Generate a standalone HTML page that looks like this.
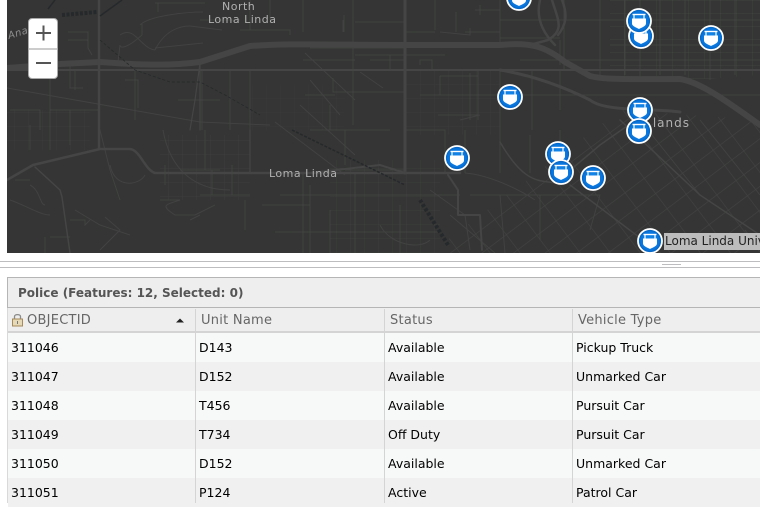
<!DOCTYPE html>
<html><head><meta charset="utf-8"><style>
*{box-sizing:border-box}
html,body{margin:0;padding:0;background:#fff;width:760px;height:503px;overflow:hidden;font-family:"DejaVu Sans",sans-serif;font-size:12.5px}
#map{position:absolute;left:7px;top:0;width:753px;height:253px;background:#343534;overflow:hidden}
#map svg{position:absolute;left:-7px;top:0}
.z{position:absolute;left:28px;top:18px;width:30px;height:61px;background:#fff;border-radius:4px;border:1px solid #aaa}
.l1{position:absolute;left:0;width:760px;height:1px;background:#bdbdc0}
.handle{position:absolute;left:662px;top:264px;width:19px;height:1px;background:#bdbdc0}
.title{position:absolute;left:7px;top:277px;width:753px;height:31px;background:#eeeeee;border:1px solid #b5b5b5;border-right:0;font-weight:bold;color:#555;padding-left:10px;line-height:30px;font-size:12px}
.hdr{position:absolute;left:8px;top:308px;width:752px;height:25px;background:#eeeeee;border-bottom:2px solid #d4d4d4;color:#666;line-height:25px;font-size:13px;letter-spacing:.25px}
.hdr span{position:absolute;top:0}
.row{position:absolute;left:8px;width:752px;height:29px;line-height:29px;color:#000;overflow:hidden}
.row span{position:absolute;top:0;line-height:30px}
.a{background:#f7f8f8}.b{background:#f0f0f0}
.v{position:absolute;top:309px;width:1px;height:194px;background:#d4d4d4}
.left{position:absolute;left:7px;top:308px;width:1px;height:195px;background:#d9d9d9}
.lab{position:absolute;left:664px;top:233px;width:96px;height:17px;background:#bcbcbc;color:#222;line-height:17px;font-size:12px;white-space:nowrap;overflow:hidden;padding-left:1px}
</style></head><body>
<div id="map">
<svg width="760" height="253" viewBox="0 0 760 253" fill="none">
<defs>
<pattern id="g1" width="16" height="13" patternUnits="userSpaceOnUse"><path d="M0 0H16M0 0V13" stroke="#424342" stroke-width="1"/></pattern>
<pattern id="g2" width="24" height="19" patternUnits="userSpaceOnUse" patternTransform="rotate(-37 600 200)"><path d="M0 0H24M0 0V19" stroke="#424342" stroke-width="1.2"/></pattern>
<pattern id="g3" width="14" height="14" patternUnits="userSpaceOnUse"><path d="M0 0H14M0 0V14" stroke="#3f403f" stroke-width="1"/></pattern>
<radialGradient id="bl" cx=".5" cy=".5" r=".55"><stop offset="0" stop-color="#1a90f0"/><stop offset=".7" stop-color="#0874dc"/><stop offset="1" stop-color="#004f9e"/></radialGradient>
<symbol id="m" viewBox="-14 -14 28 28" overflow="visible">
<circle r="12" fill="url(#bl)" stroke="#fff" stroke-width="1.8"/>
<path d="M-6.500-6.500H6.500" stroke="#fff" stroke-width="1.4"/>
<path d="M-5-6.500V-2M5-6.500V-2" stroke="#fff" stroke-width="1.200"/>
<path d="M-7-2.500H7V2.500C7 5 3 6.500 0 8C-3 6.500-7 5-7 2.500Z" fill="#fff"/>
</symbol>
</defs>
<rect width="760" height="253" fill="#343534"/>
<!-- street grids -->
<path d="M610 0L760 0V75L690 80L610 78Z" fill="url(#g1)" opacity=".9"/>
<path d="M430 253L620 110L760 120V253Z" fill="url(#g2)"/>
<path d="M330 160H440V253H330Z" fill="url(#g3)" opacity=".8"/>
<path d="M160 135H250V200H160Z" fill="url(#g3)" opacity=".7"/>
<path d="M7 110H90V150H7Z" fill="url(#g3)" opacity=".6"/>
<path d="M405 70H500V135H405Z" fill="url(#g3)" opacity=".5"/>
<path d="M250 85H345V130H250Z" fill="url(#g3)" opacity=".4"/>
<!-- minor roads -->
<g stroke="#414241" stroke-width="1">
<path d="M155 3H205M158 3V12M140 25C150 15 190 12 203 12M142 24V35M142 35C125 50 120 48 120 45"/>
<path d="M120 35C135 25 140 48 155 50C165 30 180 26 190 26L222 30M155 48L203 43M120 45L118 62"/>
<path d="M68 32H88V48L92 55M68 40H88M70 62V88H83M125 80H138V108"/>
<path d="M7 88L200 122L270 125M50 70V150M75 70V90M50 110H100M10 110H40V130M30 125V150M70 110V145"/>
<path d="M135 70V120M202 70V130M230 70V130M250 70V130M178 100H220M240 30H290V35M250 0V30"/>
<path d="M303 0V32M353 0V125M303 60H355M355 22H405M343 20V32M344 15V32M200 20H240M270 0V20"/>
<path d="M305 53L355 100M310 48H405M355 55H445M420 65V60H432V70M390 55V70M370 60H405"/>
<path d="M435 0V30M456 32V12M405 32H435M440 32L470 35V28M465 32H500M475 10H500M480 5V15M500 0V45"/>
<path d="M478 70V120M470 73V120M478 76H440M440 76V95H430M420 95H478M438 115H478M480 115L460 120"/>
<path d="M564 0V70M500 70V130M560 70V110M532 70V130M470 95H760M600 0V80M625 0V75M640 0V80M660 0V75M685 0V75M710 0V80M735 0V75"/>
<path d="M520 60H760M500 20H760M500 38H560M560 40V65M610 45H760"/>
<path d="M360 72L383 88M333 78V92H405M310 80L340 115M305 95H335M310 130H390M330 105V130"/>
<path d="M275 122L345 175M300 105L355 155M345 130V165M345 170H405"/>
<path d="M303 173V253M355 173V253M280 195H460M262 205H310M275 232H440M310 185V253M330 210V253"/>
<path d="M430 190L465 215L470 250M380 225C390 245 420 250 430 240M400 205V253"/>
<path d="M100 130L110 170L120 200M165 165V185M163 130C170 170 195 190 230 190M180 170H220M110 165C115 190 140 185 145 175"/>
<path d="M205 130V170M200 195H250M212 170V195M232 165V195M160 200H180C165 205 160 205 175 215L195 215L215 205M245 200V230M190 220L200 215"/>
<path d="M75 210L100 225L130 235M105 217L120 230L100 250M70 220H85V225L90 220M45 237V253M50 237H70"/>
<path d="M30 185C40 190 40 205 45 205M15 180H30M10 200C25 205 40 215 50 215"/>
<path d="M465 173C490 175 520 190 535 200M445 173V130H405M465 130V173M500 130V173M530 135V173M560 130V173"/>
<path d="M470 195H600L590 230M500 195L505 253M540 195V240M450 215L495 253"/>
<path d="M648 130L700 195M745 230L760 250M700 120L760 195"/>
</g>
<!-- major roads -->
<g stroke="#444544" stroke-linejoin="round" stroke-linecap="round">
<path d="M7 68L60 64L100 62C140 65 170 66 200 62L250 46C290 43 340 45 405 45H500C530 42 545 46 565 62L590 76C605 80 630 79 680 79C700 82 725 100 760 125" stroke-width="6"/>
<path d="M540 0C535 20 545 35 555 45M552 0C558 20 565 30 548 40L530 45M562 0C568 15 566 25 558 35" stroke-width="2.5"/>
<path d="M500 70C530 75 560 85 590 100C605 112 650 108 680 112" stroke-width="3"/>
<path d="M99 0V148" stroke-width="2.5"/>
<path d="M405 0V173" stroke-width="3"/>
<path d="M7 70H405L500 70H760" stroke-width="2"/>
<path d="M7 180L33 165L100 149H130C140 150 145 170 155 173H250H405H460" stroke-width="2.5"/>
<path d="M35 167L60 190L62 197L70 253" stroke-width="1.5"/>
<path d="M200 62V130M250 130V173M200 63L195 100L190 130" stroke-width="1.2"/>
<path d="M305 173H310L380 165L405 173M448 175L458 190V215H480L482 250" stroke-width="2"/>
<path d="M500 142C525 185 540 180 555 183L600 145L650 110" stroke-width="1.5"/>
<path d="M570 185L660 253M620 120L700 195L760 235" stroke-width="1.5"/>
</g>
<!-- rail / dashed -->
<g stroke="#26292b">
<path d="M62 15L97 12" stroke-width="4" stroke-dasharray="3 1.5"/>
<path d="M100 16L122 0M48 9L55 0" stroke-width="1.5"/>
<path d="M292 130L405 185" stroke-width="1.5" stroke-dasharray="3 1.5"/>
<path d="M420 200L448 245" stroke-width="4" stroke-dasharray="3 2"/>
<path d="M100 40L135 70L170 82H200L225 95L260 115" stroke-width=".8" stroke-dasharray="3 2"/>
</g>
<g font-family="'DejaVu Sans',sans-serif" font-size="11" fill="#b0b1b0" letter-spacing=".5">
<text x="222" y="10">North</text>
<text x="208" y="23">Loma Linda</text>
<text x="269" y="177">Loma Linda</text>
<text x="690" y="127" font-size="12" text-anchor="end" letter-spacing="1">lands</text>
<text transform="translate(9 39) rotate(-17)" font-size="10" font-style="italic" fill="#8d8e8d">Ana</text>
</g>
<use href="#m" x="505" y="-16" width="28" height="28"/>
<use href="#m" x="627" y="22" width="28" height="28"/>
<use href="#m" x="625" y="7" width="28" height="28"/>
<use href="#m" x="697" y="24" width="28" height="28"/>
<use href="#m" x="496" y="83" width="28" height="28"/>
<use href="#m" x="626" y="96" width="28" height="28"/>
<use href="#m" x="625" y="117" width="28" height="28"/>
<use href="#m" x="443" y="144" width="28" height="28"/>
<use href="#m" x="544" y="140" width="28" height="28"/>
<use href="#m" x="547" y="158" width="28" height="28"/>
<use href="#m" x="579" y="164" width="28" height="28"/>
</svg>
</div>
<div class="z">
<svg width="28" height="59" viewBox="0 0 28 59" style="display:block">
<path d="M7 14H22M14.500 6.500V21.500" stroke="#555" stroke-width="2"/>
<path d="M0 30H28" stroke="#999" stroke-width="1"/>
<path d="M7 44H22" stroke="#555" stroke-width="2"/>
</svg>
</div>
<div class="lab">Loma Linda University</div>
<svg width="28" height="26" viewBox="0 0 28 26" style="position:absolute;left:636px;top:227px;overflow:hidden"><use href="#m" width="28" height="28"/></svg>
<div class="l1" style="top:261px"></div>
<div class="l1" style="top:267px"></div>
<div class="handle"></div>
<div class="title">Police (Features: 12, Selected: 0)</div>
<div class="hdr">
<svg width="13" height="14" viewBox="0 0 13 14" style="position:absolute;left:3px;top:5px" fill="none"><path d="M3.500 6V3.500C3.500 1 9.500 1 9.500 3.500V6" stroke="#8a8a8a" stroke-width="1.300"/><rect x="1.500" y="6" width="10" height="7" fill="#e6d9b8" stroke="#a58a5a"/><path d="M6.500 8V11" stroke="#777"/></svg>
<span style="left:19px">OBJECTID</span>
<svg width="8" height="5" style="position:absolute;left:168px;top:10px"><path d="M0 4.500L4 .5L8 4.500Z" fill="#222"/></svg>
<span style="left:193px">Unit Name</span>
<span style="left:382px">Status</span>
<span style="left:570px">Vehicle Type</span>
</div>
<div class="row a" style="top:333px"><span style="left:3px">311046</span><span style="left:191px">D143</span><span style="left:380px">Available</span><span style="left:568px">Pickup Truck</span></div>
<div class="row b" style="top:362px"><span style="left:3px">311047</span><span style="left:191px">D152</span><span style="left:380px">Available</span><span style="left:568px">Unmarked Car</span></div>
<div class="row a" style="top:391px"><span style="left:3px">311048</span><span style="left:191px">T456</span><span style="left:380px">Available</span><span style="left:568px">Pursuit Car</span></div>
<div class="row b" style="top:420px"><span style="left:3px">311049</span><span style="left:191px">T734</span><span style="left:380px">Off Duty</span><span style="left:568px">Pursuit Car</span></div>
<div class="row a" style="top:449px"><span style="left:3px">311050</span><span style="left:191px">D152</span><span style="left:380px">Available</span><span style="left:568px">Unmarked Car</span></div>
<div class="row b" style="top:478px"><span style="left:3px">311051</span><span style="left:191px">P124</span><span style="left:380px">Active</span><span style="left:568px">Patrol Car</span></div>
<div class="left"></div>
<div class="v" style="left:195px"></div>
<div class="v" style="left:384px"></div>
<div class="v" style="left:572px"></div>
</body></html>
